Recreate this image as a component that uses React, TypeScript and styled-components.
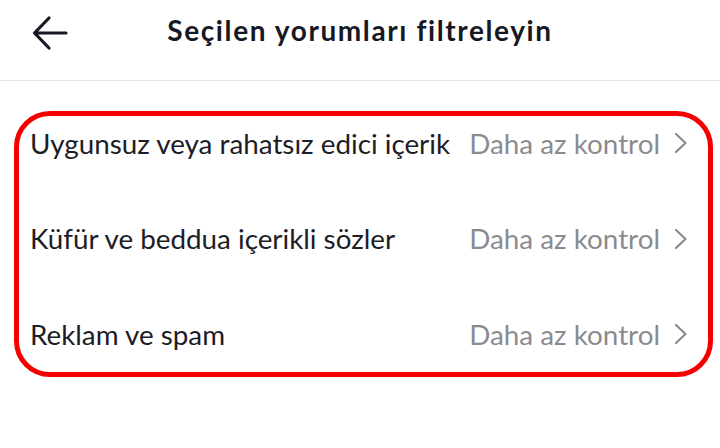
import React from "react";
import styled, { createGlobalStyle } from "styled-components";

const Global = createGlobalStyle`
  html, body { margin: 0; padding: 0; background: #fff; }
  body { font-family: "Lato", "Open Sans", sans-serif; }
`;

const Page = styled.div`
  width: 720px;
  height: 448px;
  background: #fff;
  display: flex;
  flex-direction: column;
`;

const Header = styled.header`
  height: 81px;
  border-bottom: 1px solid #e3e3e3;
  display: flex;
  align-items: center;
  position: relative;
  box-sizing: border-box;
`;

const BackButton = styled.button`
  border: 0;
  background: none;
  padding: 0;
  margin-left: 31px;
  margin-top: -14px;
  width: 38px;
  height: 38px;
  display: flex;
  align-items: center;
  justify-content: center;
  color: #161823;
`;

const Title = styled.h1`
  position: absolute;
  left: 0;
  right: 0;
  top: 13px;
  margin: 0;
  text-align: center;
  font-size: 28px;
  font-weight: 700;
  color: #161823;
  pointer-events: none;
  letter-spacing: 1.6px;
`;

const Frame = styled.div`
  margin: 30px 7px 0 14px;
  border: 5px solid #f50000;
  border-radius: 36px;
  height: 266px;
  box-sizing: border-box;
  display: flex;
  flex-direction: column;
  gap: 41.5px;
`;

const Row = styled.div`
  height: 54px;
  display: flex;
  align-items: center;
  padding: 0 19px 0 11px;
`;

const Label = styled.span`
  flex: 1;
  font-size: 27.8px;
  color: #1c1d26;
  white-space: nowrap;
`;

const Value = styled.span`
  font-size: 27.8px;
  color: #8a8b91;
  margin-right: 13px;
  white-space: nowrap;
`;

const Chevron = () => (
  <svg width="16" height="22" viewBox="0 0 16 22" fill="none">
    <path d="M3 2 L12.5 11 L3 20" stroke="#8a8b91" strokeWidth="2.2" strokeLinecap="round" strokeLinejoin="round" />
  </svg>
);

const items = [
  "Uygunsuz veya rahatsız edici içerik",
  "Küfür ve beddua içerikli sözler",
  "Reklam ve spam",
];

export default function App() {
  return (
    <Page>
      <Global />
      <Header>
        <BackButton aria-label="Geri">
          <svg width="36" height="36" viewBox="0 0 36 36" fill="none">
            <path d="M34 18 H3 M17 3 L2.5 18 L17 33" stroke="#161823" strokeWidth="3.2" strokeLinecap="round" strokeLinejoin="round" />
          </svg>
        </BackButton>
        <Title>Seçilen yorumları filtreleyin</Title>
      </Header>
      <Frame>
        {items.map((t) => (
          <Row key={t}>
            <Label>{t}</Label>
            <Value>Daha az kontrol</Value>
            <Chevron />
          </Row>
        ))}
      </Frame>
    </Page>
  );
}
